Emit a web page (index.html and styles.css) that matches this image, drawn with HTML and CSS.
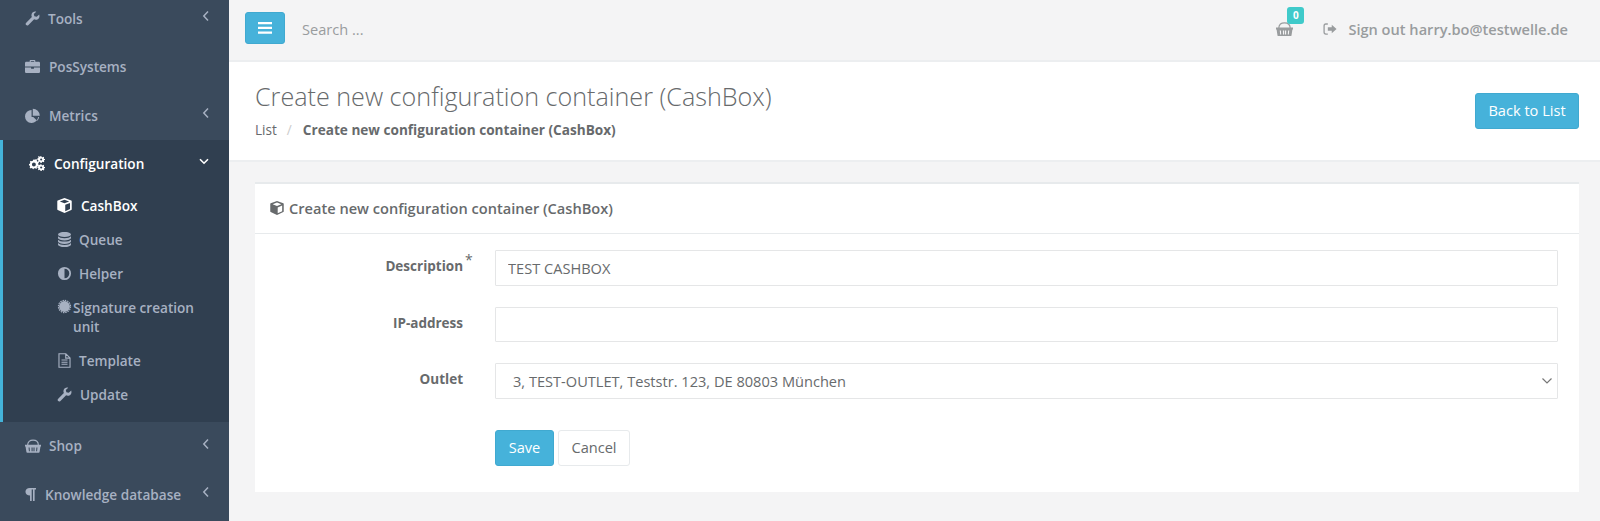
FILE: index.html
```html
<!DOCTYPE html>
<html lang="en">
<head>
  <meta charset="UTF-8" />
  <title>Create new configuration container (CashBox)</title>
  <link rel="stylesheet" href="styles.css">
</head>
<body>

<svg class="sprite" width="0" height="0">
  <symbol id="i-wrench" viewBox="0 0 16 16"><path d="M15.2 3.600 12.500 6.200 10 5.700 9.400 3.200 12 .7C9.900 0 7.600 1.200 7 3.400c-.3 1.100-.2 2.200.3 3.100L1.300 12.400c-.8.8-.8 1.800-.1 2.500s1.700.7 2.500-.1L9.700 8.900c.9.5 2 .6 3 .3 2.300-.6 3.300-3.200 2.500-5.600z"/></symbol>
  <symbol id="i-briefcase" viewBox="0 0 16 16"><path d="M5 3V1.800C5 1.300 5.400 1 5.800 1h4.400c.4 0 .8.3.8.8V3h3.600c.5 0 1.400.4 1.400 1.200V8H0V4.200C0 3.400.9 3 1.400 3zm1.200 0h3.600V2.200H6.200zM0 9h6.500v1.500h3V9H16v4.500c0 .8-.7 1.500-1.400 1.500H1.400C.7 15 0 14.300 0 13.500z"/></symbol>
  <symbol id="i-pie" viewBox="0 0 16 16"><path d="M7 2a7 7 0 1 0 7 7.500H7zM8.300.8v7.400h7.500A7.500 7.500 0 0 0 8.300.8zM8.800 9.500H15a6.500 6.500 0 0 1-2 4.200z"/></symbol>
  <symbol id="i-cogs" viewBox="0 0 18 16"><path fill-rule="evenodd" d="M5.500 3.500l1.500.3.800-.8 1.300.8-.4 1.100.9 1 1.100-.1.500 1.500-1 .6v1.300l1 .7-.5 1.400-1.200-.1-.8 1 .4 1.100-1.300.8-.8-.9-1.500.3-.5 1.100H4.500L4 13.500l-1.400-.5-.9.700-1-1.100.6-1-.6-1.300L0 10V8.500l1-.3.500-1.300-.6-1 1.100-1.100 1 .6L4.300 4.900l.4-1.100zM5.500 7a2.200 2.200 0 1 0 0 4.400A2.200 2.200 0 0 0 5.500 7z"/><path fill-rule="evenodd" d="M14 0l.4 1 1 .1.700-.7.9.6-.4 1 .6.800 1 0 0 1.200-1 .2-.4.9.5.9-.9.7-.8-.6-1 .2-.4 1H13l-.4-1-.9-.3-.8.6-.8-.8.5-.9-.3-.9-1-.3V2.300l1-.1.400-.9-.5-.9.900-.7.800.6 1-.3.300-1zM13.700 2.300a1.200 1.200 0 1 0 0 2.400 1.200 1.200 0 0 0 0-2.400z"/><path fill-rule="evenodd" d="M14 9l.4 1 1 .1.700-.6.900.6-.4 1 .6.800 1 .1v1.100l-1 .2-.4.900.5.900-.9.700-.8-.6-1 .2-.4.900H13l-.4-1-.9-.3-.8.600-.8-.8.5-.9-.3-.9-1-.3v-1.100l1-.1.400-.9-.5-.9.900-.7.800.6 1-.3.300-1zM13.700 11.300a1.200 1.200 0 1 0 0 2.400 1.200 1.200 0 0 0 0-2.400z"/></symbol>
  <symbol id="i-cube" viewBox="0 0 16 16"><path fill-rule="evenodd" d="M8 0l7.200 2.700c.3.100.5.400.5.700V12c0 .3-.2.600-.5.700L8 16 .8 12.700c-.3-.1-.5-.4-.5-.7V3.400c0-.3.2-.6.500-.7zM8 1.800 3 3.700l5 2 5-2zM8.800 14l5.100-2.400V5.200L8.800 7.300z"/></symbol>
  <symbol id="i-database" viewBox="0.500 0.500 15 15"><ellipse cx="8" cy="3" rx="6.500" ry="2.600"/><path d="M1.500 4.800C2.500 6 5 6.700 8 6.700s5.500-.7 6.500-1.900v2C14 8 11.500 9 8 9s-6-1-6.500-2.200zM1.500 8.200C2.500 9.400 5 10.100 8 10.100s5.500-.7 6.500-1.900v2.100C14 11.500 11.500 12.400 8 12.400s-6-.9-6.500-2.100zM1.500 11.600c1 1.200 3.500 1.900 6.500 1.900s5.500-.7 6.500-1.900v1.700C14 14.700 11.500 15.700 8 15.700s-6-1-6.500-2.400z"/></symbol>
  <symbol id="i-adjust" viewBox="0 0 16 16"><path fill-rule="evenodd" d="M8 1a7 7 0 1 1 0 14A7 7 0 0 1 8 1zM8 2.900v10.200a5.100 5.100 0 0 0 0-10.200z"/></symbol>
  <symbol id="i-cert" viewBox="-1 -1 18 18"><circle cx="8" cy="8" r="6.500"/><circle cx="8" cy="8" r="7.300" fill="none" stroke="currentColor" stroke-width="1.400" stroke-dasharray="1.800 1.020"/></symbol>
  <symbol id="i-file" viewBox="0 0 16 16"><path fill="none" stroke="currentColor" stroke-width="1.200" d="M2.100 .8h7.300l4.500 4.400v10H2.100zM9.300 .8v4.600h4.500"/><path fill="none" stroke="currentColor" stroke-width="1.100" d="M4.800 7.500h6.400M4.800 9.800h6.400M4.800 12.100h6.400"/></symbol>
  <symbol id="i-basket" viewBox="0 0 18 16"><path fill="none" stroke="currentColor" stroke-width="1.300" d="M3 7C3 3.200 5.500 1.400 9 1.400S15 3.200 15 7"/><path fill-rule="evenodd" d="M0 6.500h18v2.100h-.6l-1 6.200c-.1.400-.4.700-.8.700H2.400c-.4 0-.7-.3-.8-.7l-1-6.200H0zM4 9.700l.4 4.200h1.100L5.200 9.700zM7.300 9.700l.1 4.200h1.200V9.700zM9.500 9.700v4.200h1.200l.1-4.200zM12.800 9.700l-.3 4.200h1.100L14 9.700z"/></symbol>
  <symbol id="i-para" viewBox="0 0 12 16"><path d="M5 1h7v1.600h-1.500V15H8.700V2.600H7.300V15H5.500V9C2.500 9 .5 7.500.5 5S2.500 1 5 1z"/></symbol>
  <symbol id="i-signout" viewBox="0 0 16 16"><path d="M5.500 3H3.300C2.600 3 2 3.600 2 4.300v7.400c0 .7.600 1.300 1.300 1.300h2.200v1.500H3.200C1.500 14.500.5 13.300.5 11.800V4.200C.5 2.700 1.500 1.500 3.200 1.500h2.300zM10 3.200 15.500 8 10 12.800V10H5.500V6H10z"/></symbol>
  <symbol id="i-left" viewBox="0 0 8 12"><path fill="none" stroke="currentColor" stroke-width="1.500" d="M6 1.500 1.800 6 6 10.500"/></symbol>
  <symbol id="i-down" viewBox="0 0 10 7"><path fill="none" stroke="currentColor" stroke-width="1.600" d="M1 1.200 5 5.200l4-4"/></symbol>
</svg>

<div class="app">
  <nav class="sidebar">
    <ul class="nav">
      <li class="nav-item"><svg class="ico"><use href="#i-wrench"/></svg><span class="nav-label gap-tools">Tools</span><svg class="arrow"><use href="#i-left"/></svg></li>
      <li class="nav-item"><svg class="ico"><use href="#i-briefcase"/></svg><span class="nav-label">PosSystems</span></li>
      <li class="nav-item"><svg class="ico"><use href="#i-pie"/></svg><span class="nav-label">Metrics</span><svg class="arrow"><use href="#i-left"/></svg></li>
      <li class="nav-group">
        <div class="nav-item nav-open"><svg class="ico"><use href="#i-cogs"/></svg><span class="nav-label">Configuration</span><svg class="arrow-down"><use href="#i-down"/></svg></div>
        <ul class="subnav">
          <li class="sub-item sub-active"><svg class="sub-ico"><use href="#i-cube"/></svg><span class="sub-gap-lg">CashBox</span></li>
          <li class="sub-item"><svg class="sub-ico"><use href="#i-database"/></svg><span class="sub-gap">Queue</span></li>
          <li class="sub-item"><svg class="sub-ico"><use href="#i-adjust"/></svg><span class="sub-gap">Helper</span></li>
          <li class="sub-item sub-wrap"><svg class="sub-ico"><use href="#i-cert"/></svg><span class="sub-gap-sm">Signature creation unit</span></li>
          <li class="sub-item"><svg class="sub-ico"><use href="#i-file"/></svg><span class="sub-gap">Template</span></li>
          <li class="sub-item"><svg class="sub-ico"><use href="#i-wrench"/></svg><span class="sub-gap-md">Update</span></li>
        </ul>
      </li>
      <li class="nav-item"><svg class="ico ico-shop"><use href="#i-basket"/></svg><span class="nav-label gap-shop">Shop</span><svg class="arrow"><use href="#i-left"/></svg></li>
      <li class="nav-item"><svg class="ico ico-para"><use href="#i-para"/></svg><span class="nav-label">Knowledge database</span><svg class="arrow"><use href="#i-left"/></svg></li>
    </ul>
  </nav>

  <main class="page">
    <header class="topbar">
      <button class="btn btn-info btn-menu" type="button" aria-label="Menu">
        <svg width="14" height="12" viewBox="0 0 14 12"><path fill="#fff" d="M0 0h14v2.200H0zM0 4.800h14V7H0zM0 9.600h14v2.200H0z"/></svg>
      </button>
      <span class="search">Search ...</span>
      <span class="cart">
        <svg class="cart-ico"><use href="#i-basket"/></svg>
        <span class="cart-badge">0</span>
      </span>
      <a class="signout"><svg class="signout-ico"><use href="#i-signout"/></svg>Sign out harry.bo@testwelle.de</a>
    </header>

    <section class="heading">
      <div>
        <h2>Create new configuration container (CashBox)</h2>
        <div class="crumbs"><span>List</span><span class="crumb-sep">/</span><strong>Create new configuration container (CashBox)</strong></div>
      </div>
      <button class="btn btn-info btn-back" type="button">Back to List</button>
    </section>

    <section class="content">
      <div class="card">
        <div class="card-title"><svg class="title-ico"><use href="#i-cube"/></svg>Create new configuration container (CashBox)</div>
        <form class="card-body">
          <div class="form-row">
            <label>Description<sup>*</sup></label>
            <input class="field" type="text" value="TEST CASHBOX">
          </div>
          <div class="form-row">
            <label>IP-address</label>
            <input class="field" type="text">
          </div>
          <div class="form-row">
            <label>Outlet</label>
            <select class="field field-select">
              <option>3, TEST-OUTLET, Teststr. 123, DE 80803 München</option>
            </select>
          </div>
          <div class="form-actions">
            <button class="btn btn-info btn-save" type="button">Save</button>
            <button class="btn btn-white" type="button">Cancel</button>
          </div>
        </form>
      </div>
    </section>
  </main>
</div>

</body>
</html>
```

FILE: styles.css
```css
html, body {
  margin: 0;
  padding: 0;
  height: 100%;
  overflow: hidden;
  font-family: "Open Sans", "Liberation Sans", sans-serif;
  font-size: 14.6px;
  color: #676a6c;
  background: #f4f4f5;
}

.sprite {
  position: absolute;
}

ul {
  list-style: none;
  margin: 0;
  padding: 0;
}

.app {
  display: flex;
  height: 521px;
  overflow: hidden;
}

/* sidebar */
.sidebar {
  width: 229px;
  flex: none;
  background: #3a4a5c;
  color: #a7b1c2;
  font-size: 13.6px;
  font-weight: 600;
  overflow: hidden;
}

.nav {
  margin-top: -6px;
}

.nav-item {
  display: flex;
  align-items: center;
  height: 48.500px;
  padding-left: 25px;
  padding-right: 19px;
  box-sizing: border-box;
}

.ico {
  width: 15px;
  height: 15px;
  flex: none;
  fill: currentColor;
}

.ico-shop {
  width: 16px;
  height: 16px;
}

.ico-para {
  width: 11px;
}

.nav-label {
  margin-left: 9px;
  flex: 1;
}

.gap-tools {
  margin-left: 8px;
}

.gap-shop {
  margin-left: 8px;
}

.arrow {
  width: 8px;
  height: 12px;
  margin-top: -4px;
  color: #a7b1c2;
}

.arrow-down {
  width: 10px;
  height: 7px;
  margin-top: -4px;
  margin-right: 1px;
  color: #fff;
}

.nav-group {
  background: #303f50;
  border-left: 3px solid #44b3d9;
  height: 282px;
}

.nav-open {
  padding-left: 26px;
  color: #fff;
}

.nav-open .ico {
  width: 16px;
  height: 15px;
}

.subnav {
  padding-left: 54px;
  padding-right: 16px;
}

.sub-item {
  display: flex;
  align-items: center;
  height: 34px;
}

.sub-wrap {
  align-items: flex-start;
  height: 53px;
  padding-top: 8px;
  box-sizing: border-box;
  line-height: 19px;
}

.sub-wrap .sub-ico {
  margin-top: 1px;
}

.sub-active {
  color: #fff;
}

.sub-ico {
  width: 15px;
  height: 15px;
  flex: none;
  fill: currentColor;
}

.sub-gap { margin-left: 7px; }
.sub-gap-md { margin-left: 8px; }
.sub-gap-lg { margin-left: 9px; }
.sub-gap-sm { margin-left: 1px; }

/* top bar */
.page {
  flex: 1;
  min-width: 0;
  display: flex;
  flex-direction: column;
}

.topbar {
  display: flex;
  align-items: center;
  height: 60px;
  padding: 0 32px 0 16px;
  border-bottom: 2px solid #eceef0;
  color: #999c9e;
}

.btn {
  font-family: inherit;
  font-size: 14.6px;
  border: 1px solid transparent;
  border-radius: 3px;
  cursor: pointer;
}

.btn-info {
  background: #46b2da;
  border-color: #40a9d0;
  color: #fff;
}

.btn-menu {
  width: 40px;
  height: 32px;
  padding: 0;
  margin-bottom: 4px;
  display: flex;
  align-items: center;
  justify-content: center;
}

.search {
  margin-left: 17px;
  flex: 1;
  margin-bottom: 2px;
  color: #999c9e;
}

.cart {
  position: relative;
  width: 16px;
  height: 16px;
  margin-bottom: 2px;
  margin-right: 31px;
}

.cart-ico {
  width: 17px;
  height: 16px;
  fill: currentColor;
}

.cart-badge {
  position: absolute;
  left: 11px;
  top: -14px;
  width: 17px;
  height: 17px;
  border-radius: 3px;
  background: #3fcaca;
  color: #fff;
  font-size: 10px;
  font-weight: 700;
  line-height: 17px;
  text-align: center;
}

.signout {
  display: flex;
  align-items: center;
  font-weight: 600;
  margin-bottom: 2px;
}

.signout-ico {
  width: 14px;
  height: 14px;
  margin-right: 11px;
  fill: currentColor;
}

/* page heading */
.heading {
  display: flex;
  justify-content: space-between;
  background: #fff;
  height: 98px;
  padding: 0 21px 0 26px;
  border-bottom: 2px solid #eceef0;
  box-sizing: content-box;
}

.heading h2 {
  margin: 16px 0 0;
  font-size: 25.150px;
  font-weight: 300;
  line-height: 36px;
}

.crumbs {
  margin-top: 6px;
  font-size: 13.6px;
  line-height: 20px;
}

.crumb-sep {
  margin: 0 11px 0 10px;
  color: #ccc;
}

.crumbs strong {
  font-weight: 700;
}

.btn-back {
  width: 104px;
  height: 36px;
  margin-top: 31px;
  padding: 0 0 2px;
}

/* form card */
.content {
  flex: 1;
  padding: 20px 21px 0 26px;
}

.card {
  background: #fff;
  border-top: 2px solid #e7eaec;
}

.card-title {
  display: flex;
  align-items: center;
  height: 48.500px;
  padding-left: 15px;
  border-bottom: 1px solid #e7eaec;
  font-weight: 600;
}

.title-ico {
  width: 14px;
  height: 14px;
  margin-right: 5px;
  fill: currentColor;
}

.card-body {
  padding: 16.500px 21px 26px 0;
}

.form-row {
  display: flex;
  align-items: center;
  gap: 32px;
  margin-bottom: 21px;
}

.form-row label {
  width: 208px;
  text-align: right;
  font-weight: 700;
  font-size: 13.5px;
  margin-bottom: 3px;
  position: relative;
}

.form-row sup {
  position: absolute;
  left: 100%;
  top: -4px;
  margin-left: 2px;
  font-size: 14px;
  font-weight: 400;
  line-height: 1;
}

.field {
  flex: 1;
  min-width: 0;
  height: 35.500px;
  box-sizing: border-box;
  padding: 0 12px;
  border: 1px solid #e5e6e7;
  border-radius: 1px;
  background: #fff;
  font-family: inherit;
  font-size: 14.6px;
  color: #676a6c;
  outline: none;
}

.field-select {
  appearance: none;
  padding-left: 17px;
  background: #fff url("data:image/svg+xml,%3Csvg xmlns='http://www.w3.org/2000/svg' width='10' height='6'%3E%3Cpath fill='none' stroke='%23777' stroke-width='1.200' d='M.5.5 5 5 9.500.5'/%3E%3C/svg%3E") no-repeat right 5px center;
}

.form-actions {
  display: flex;
  gap: 4px;
  margin-left: 240px;
  padding-top: 10px;
}

.btn-save {
  width: 59px;
  height: 36px;
  padding: 0 0 2px;
}

.btn-white {
  width: 72px;
  height: 36px;
  padding: 0 0 2px;
  background: #fff;
  border-color: #e7eaec;
  color: #676a6c;
}
```
